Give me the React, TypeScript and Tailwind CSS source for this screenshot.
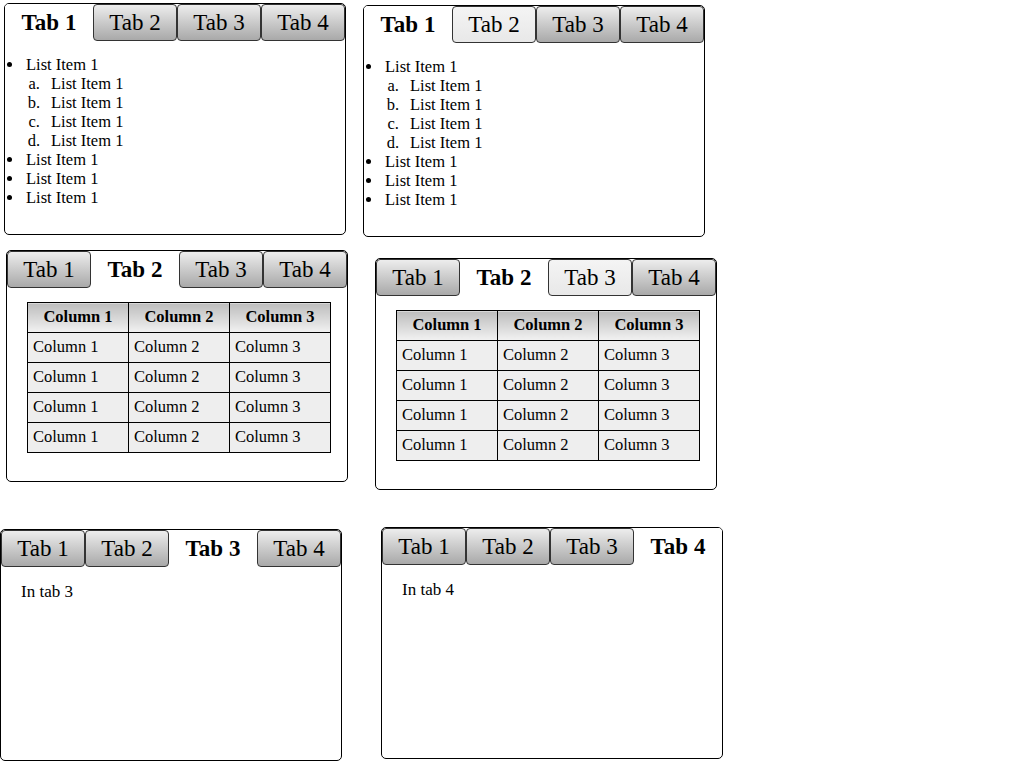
import React from "react";

type TabState = "active" | "hover" | "idle";

const TABS = ["Tab 1", "Tab 2", "Tab 3", "Tab 4"];

function TabBar({ active, hover }: { active: number; hover?: number }) {
  return (
    <div className="flex h-[37px]">
      {TABS.map((t, i) => {
        const state: TabState = i === active ? "active" : i === hover ? "hover" : "idle";
        if (state === "active") {
          return (
            <div
              key={t}
              className="w-[88px] h-[37px] flex items-center justify-center pb-[1px] bg-white font-bold text-[23px] leading-none"
            >
              {t}
            </div>
          );
        }
        return (
          <div
            key={t}
            className={`w-[84px] h-[37px] flex items-center justify-center pb-[1px] border border-[#333] rounded-[4px] text-[23px] leading-none ${
              state === "hover"
                ? "bg-gradient-to-b from-[#f4f4f4] to-[#e8e8e8]"
                : "bg-gradient-to-b from-[#ededed] to-[#a9a9a9]"
            }`}
          >
            {t}
          </div>
        );
      })}
    </div>
  );
}

function Panel({ children, className = "" }: { children: React.ReactNode; className?: string }) {
  return (
    <div className={`w-[342px] h-[232px] border border-black rounded-[5px] bg-white overflow-hidden ${className}`}>
      {children}
    </div>
  );
}

function Bullet({ children }: { children: React.ReactNode }) {
  return (
    <li className="flex">
      <span className="w-[21px] shrink-0 h-[19px] flex items-center pl-[2px]">
        <span className="w-[5px] h-[5px] rounded-full bg-black" />
      </span>
      <div>{children}</div>
    </li>
  );
}

function Lettered({ label }: { label: string }) {
  return (
    <li className="flex">
      <span className="w-[14px] text-right">{label}</span>
      <span className="ml-[11px]">List Item 1</span>
    </li>
  );
}

function ListContent() {
  return (
    <ul className="pt-[14px] text-[16.5px] leading-[19px]">
      <Bullet>
        List Item 1
        <ol>
          {["a.", "b.", "c.", "d."].map((l) => (
            <Lettered key={l} label={l} />
          ))}
        </ol>
      </Bullet>
      <Bullet>List Item 1</Bullet>
      <Bullet>List Item 1</Bullet>
      <Bullet>List Item 1</Bullet>
    </ul>
  );
}

function TableContent() {
  const rows = [0, 1, 2, 3];
  return (
    <div className="pl-[20px] pt-[14px]">
      <table className="border-collapse w-[304px] text-[16.5px]">
        <thead>
          <tr>
            {["Column 1", "Column 2", "Column 3"].map((c) => (
              <th
                key={c}
                className="border border-black h-[30px] w-[101px] bg-gradient-to-b from-[#bdbdbd] to-[#f2f2f2] font-bold text-center"
              >
                {c}
              </th>
            ))}
          </tr>
        </thead>
        <tbody>
          {rows.map((r) => (
            <tr key={r}>
              {["Column 1", "Column 2", "Column 3"].map((c) => (
                <td key={c} className="border border-black h-[30px] bg-[#eeeeee] pl-[5px] text-left font-normal">
                  {c}
                </td>
              ))}
            </tr>
          ))}
        </tbody>
      </table>
    </div>
  );
}

export default function App() {
  return (
    <div className="w-[1024px] h-[768px] bg-white text-black overflow-hidden font-['Liberation_Serif','Times_New_Roman',serif]">
      <div className="flex items-start h-[250px]">
        <Panel className="ml-[4px] mt-[3px]">
          <TabBar active={0} />
          <ListContent />
        </Panel>
        <Panel className="ml-[17px] mt-[5px]">
          <TabBar active={0} hover={1} />
          <ListContent />
        </Panel>
      </div>
      <div className="flex items-start h-[277px]">
        <Panel className="ml-[6px] h-[231px]">
          <TabBar active={1} />
          <TableContent />
        </Panel>
        <Panel className="ml-[27px] mt-[8px]">
          <TabBar active={1} hover={2} />
          <TableContent />
        </Panel>
      </div>
      <div className="flex items-start">
        <Panel className="mt-[2px]">
          <TabBar active={2} />
          <p className="pl-[20px] pt-[12px] text-[17px]">In tab 3</p>
        </Panel>
        <Panel className="ml-[39px]">
          <TabBar active={3} />
          <p className="pl-[20px] pt-[12px] text-[17px]">In tab 4</p>
        </Panel>
      </div>
    </div>
  );
}
